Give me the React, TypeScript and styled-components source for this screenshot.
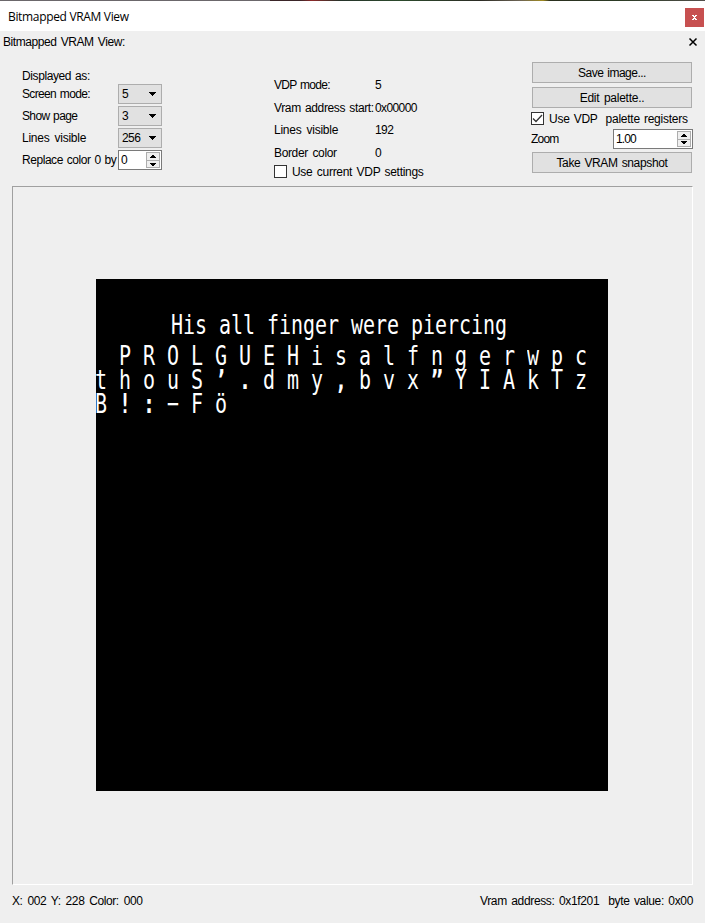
import React from "react";
import styled, { createGlobalStyle } from "styled-components";

const GlobalStyle = createGlobalStyle`
  * { box-sizing: border-box; }
  body {
    margin: 0;
    background: #efefef;
    color: #000;
    font: 12px/14px "Liberation Sans", Arial, sans-serif;
    overflow: hidden;
  }
`;

const Window = styled.div`
  width: 705px;
  height: 923px;
  display: flex;
  flex-direction: column;
  background: #efefef;
`;

const Backdrop = styled.div`
  height: 1px;
  flex: none;
  background: linear-gradient(90deg, #6b676b 0 270px, #3a2528 270px 300px, #8c2a2a 312px, #26332a 340px, #2c4a2c 400px, #2b2b24 480px, #6d6455 520px, #a08a20 543px, #2a2f1e 550px, #2c3b25 620px, #514e4a 705px);
`;

const TitleBar = styled.header`
  height: 30px;
  flex: none;
  display: flex;
  justify-content: space-between;
  background: #fff;
  padding: 7px 1px 0 8px;
  font: 12px/17px "Open Sans", "Noto Sans", sans-serif;
`;

const CloseButton = styled.button`
  width: 19px;
  height: 19px;
  padding: 0;
  border: 0;
  background: #c75050;
  display: grid;
  place-items: center;
`;

const DockTitle = styled.div`
  height: 31px;
  flex: none;
  display: flex;
  justify-content: space-between;
  padding: 4px 7px 0 3px;
`;

const Text = styled.span<{ $ls?: number; $ws?: number }>`
  display: inline-block;
  white-space: pre;
  letter-spacing: ${(p) => p.$ls ?? 0}px;
  word-spacing: ${(p) => p.$ws ?? 0}px;
`;

const Controls = styled.section`
  height: 124px;
  flex: none;
  display: grid;
  grid-template-columns: 252px 257px 162px;
  padding-left: 22px;
`;

const Column = styled.div<{ $top?: number }>`
  display: flex;
  flex-direction: column;
  padding-top: ${(p) => p.$top ?? 0}px;
`;

const Row = styled.div<{ $h: number; $label?: number }>`
  height: ${(p) => p.$h}px;
  flex: none;
  display: grid;
  grid-template-columns: ${(p) => (p.$label ? `${p.$label}px max-content` : "max-content")};
  align-items: center;
`;

const Combo = styled.div`
  width: 44px;
  height: 20px;
  border: 1px solid #adadad;
  background: #e1e1e1;
  padding: 0 5px 0 3px;
  display: flex;
  align-items: center;
  justify-content: space-between;
`;

const Spin = styled.div<{ $w: number }>`
  width: ${(p) => p.$w}px;
  height: 20px;
  border: 1px solid #7a7a7a;
  background: #fff;
  padding: 1px 1px 1px 2px;
  display: flex;
  justify-content: space-between;
  align-items: center;
`;

const Steps = styled.div`
  width: 14px;
  height: 16px;
  display: grid;
  grid-template-rows: 1fr 1fr;
  background: #efefef;
  border: 1px solid #adadad;
`;

const Step = styled.span`
  display: grid;
  place-items: center;
  & + & { border-top: 1px solid #adadad; }
`;

const PushButton = styled.button`
  width: 160px;
  height: 21px;
  margin: 0 0 4px 1px;
  padding: 0;
  flex: none;
  border: 1px solid #adadad;
  background: #e1e1e1;
  color: #000;
  font: inherit;
`;

const Check = styled.label<{ $h: number }>`
  height: ${(p) => p.$h}px;
  flex: none;
  display: flex;
  align-items: center;
  gap: 5px;
`;

const Box = styled.span`
  width: 13px;
  height: 13px;
  border: 1px solid #333;
  background: #fff;
  display: grid;
  place-items: center;
`;

const Frame = styled.main`
  width: 681px;
  height: 699px;
  flex: none;
  margin-left: 12px;
  padding: 92px 0 0 83px;
  border: 1px solid #fff;
  border-top-color: #a0a0a0;
  border-left-color: #a0a0a0;
`;

const Vram = styled.div`
  width: 512px;
  height: 512px;
  overflow: hidden;
  background: #000;
  color: #fff;
  padding-top: 33px;
  font: 20px/24px "DejaVu Sans Mono", monospace;
`;

const Sentence = styled.div`
  height: 24px;
  margin-bottom: 7px;
  padding-left: 75px;
  white-space: pre;
  letter-spacing: -0.04px;
  transform: scaleY(1.37);
`;

const Cells = styled.div`
  height: 24px;
  display: grid;
  grid-template-columns: repeat(21, 24px);
`;

const Cell = styled.span<{ $bold: boolean }>`
  white-space: pre;
  margin-left: -1px;
  font-weight: ${(p) => (p.$bold ? 700 : 400)};
  transform: scaleY(1.37);
`;

const Status = styled.footer`
  display: flex;
  justify-content: space-between;
  padding: 9px 12px 0 12px;
`;

const Down = () => (
  <svg width="8" height="4" viewBox="0 0 8 4" shapeRendering="crispEdges">
    <path d="M0 0h8L4 4z" />
  </svg>
);

const Spinner = ({ w, value }: { w: number; value: string }) => (
  <Spin $w={w}>
    <Text $ls={-0.9}>{value}</Text>
    <Steps>
      <Step>
        <svg width="6" height="3" viewBox="0 0 6 3" shapeRendering="crispEdges"><path d="M2 0h2v1h1v1h1v1H0V2h1V1h1z" /></svg>
      </Step>
      <Step>
        <svg width="6" height="3" viewBox="0 0 6 3" shapeRendering="crispEdges"><path d="M0 0h6v1H5v1H4v1H2V2H1V1H0z" /></svg>
      </Step>
    </Steps>
  </Spin>
);

const modes = [
  { label: "Screen mode:", value: "5", ls: -0.65, ws: 1 },
  { label: "Show page", value: "3", ls: -0.65, ws: 1 },
  { label: "Lines visible", value: "256", ls: -0.25, ws: 2 },
];

const info = [
  { label: "VDP mode:", value: "5", h: 22, ls: -0.7, ws: 1 },
  { label: "Vram address start:", value: "0x00000", h: 23, ls: -0.36, ws: 1.2 },
  { label: "Lines visible", value: "192", h: 22, ls: -0.25, ws: 2 },
  { label: "Border color", value: "0", h: 23, ls: -0.35, ws: 1.5 },
];

const glyphRows = [" PROLGUEHisalfngerwpc", "thouS’.dmy,bvx”YIAkTz", "B!:-Fö"];

export default function App() {
  return (
    <Window>
      <GlobalStyle />
      <Backdrop />
      <TitleBar>
        <Text $ls={-0.33}>Bitmapped VRAM View</Text>
        <CloseButton aria-label="Close">
          <svg width="5" height="5" viewBox="0 0 5 5" fill="#fff" shapeRendering="crispEdges">
            <path d="M0 0h2v1h1V0h2v1H4v1H3v1h1v1h1v1H3V4H2v1H0V4h1V3h1V2H1V1H0z" />
          </svg>
        </CloseButton>
      </TitleBar>
      <DockTitle>
        <Text $ls={-0.42} $ws={1.2}>Bitmapped VRAM View:</Text>
        <svg width="10" height="14" viewBox="0 0 10 14" stroke="#000" strokeWidth="1.5" fill="none">
          <path d="M1.5 3.5l7 7M8.5 3.5l-7 7" />
        </svg>
      </DockTitle>
      <Controls>
        <Column $top={7}>
          <Row $h={14}><Text $ls={-0.4} $ws={1}>Displayed as:</Text></Row>
          {modes.map((m) => (
            <Row key={m.label} $h={22} $label={96}>
              <Text $ls={m.ls} $ws={m.ws}>{m.label}</Text>
              <Combo><Text $ls={-0.6}>{m.value}</Text><Down /></Combo>
            </Row>
          ))}
          <Row $h={22} $label={96}>
            <Text $ls={-0.45} $ws={1}>Replace color 0 by</Text>
            <Spinner w={44} value="0" />
          </Row>
        </Column>
        <Column $top={12}>
          {info.map((m) => (
            <Row key={m.label} $h={m.h} $label={101}>
              <Text $ls={m.ls} $ws={m.ws}>{m.label}</Text>
              <Text $ls={-0.6}>{m.value}</Text>
            </Row>
          ))}
          <Check $h={15}><Box /><Text $ls={-0.3} $ws={1.4}>Use current VDP settings</Text></Check>
        </Column>
        <Column>
          <PushButton><Text $ls={-0.5} $ws={1}>Save image...</Text></PushButton>
          <PushButton><Text $ls={-0.25} $ws={1.5}>Edit palette..</Text></PushButton>
          <Check $h={13}>
            <Box>
              <svg width="11" height="11" viewBox="0 0 11 11" fill="none" stroke="#333" strokeWidth="1.3"><path d="M1 5.5l3 3L10 2" /></svg>
            </Box>
            <Text $ls={-0.25} $ws={1}>Use VDP  palette registers</Text>
          </Check>
          <Row $h={27} $label={82}>
            <Text $ls={-0.8}>Zoom</Text>
            <Spinner w={80} value="1.00" />
          </Row>
          <PushButton><Text $ls={-0.35} $ws={1}>Take VRAM snapshot</Text></PushButton>
        </Column>
      </Controls>
      <Frame>
        <Vram>
          <Sentence>His all finger were piercing</Sentence>
          {glyphRows.map((row) => (
            <Cells key={row}>
              {Array.from(row).map((ch, i) => <Cell key={i} $bold={"!:’.,”".includes(ch)}>{ch === "-" ? "−" : ch}</Cell>)}
            </Cells>
          ))}
        </Vram>
      </Frame>
      <Status>
        <Text $ls={-0.42} $ws={2}>X: 002 Y: 228 Color: 000</Text>
        <Text $ls={-0.35} $ws={1.5}>Vram address: 0x1f201  byte value: 0x00</Text>
      </Status>
    </Window>
  );
}
